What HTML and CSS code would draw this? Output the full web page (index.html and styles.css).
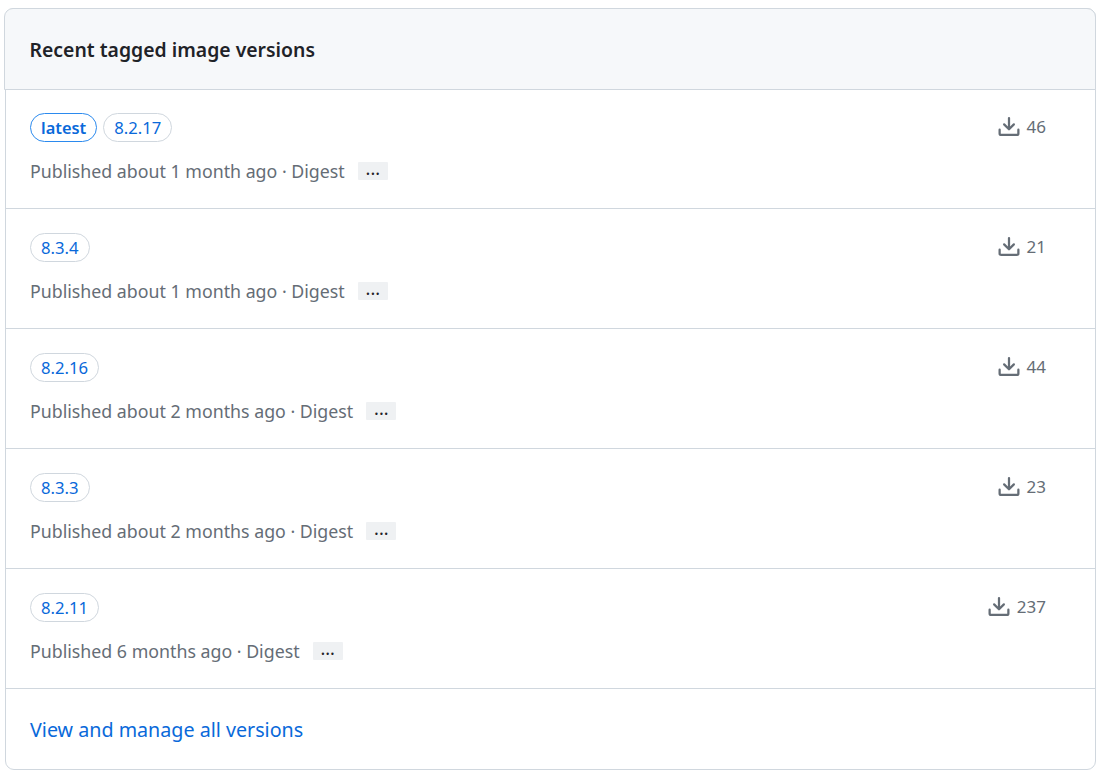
FILE: index.html
```html
<!DOCTYPE html>
<html lang="en">
<head>
<meta charset="utf-8">
<title>Recent tagged image versions</title>
<link rel="stylesheet" href="styles.css">
</head>
<body>
<section class="box">
  <header class="box-header"><h2 class="box-title">Recent tagged image versions</h2></header>
  <ul class="versions">
    <li class="row">
      <div class="row-main">
        <div class="tags"><a class="tag tag-latest" href="#">latest</a><a class="tag" href="#">8.2.17</a></div>
        <div class="meta">Published about 1 month ago · Digest <button class="more">···</button></div>
      </div>
      <div class="downloads"><svg class="dl" viewBox="0 0 16 16"><path d="M2.75 14A1.75 1.75 0 0 1 1 12.25v-2.5a.75.75 0 0 1 1.5 0v2.5c0 .138.112.25.25.25h10.5a.25.25 0 0 0 .25-.25v-2.5a.75.75 0 0 1 1.5 0v2.5A1.75 1.75 0 0 1 13.25 14Z"/><path d="M7.25 7.689V2a.75.75 0 0 1 1.5 0v5.689l1.97-1.969a.749.749 0 1 1 1.06 1.06l-3.25 3.25a.749.749 0 0 1-1.06 0L4.22 6.78a.749.749 0 1 1 1.06-1.06l1.97 1.969Z"/></svg>46</div>
    </li>
    <li class="row">
      <div class="row-main">
        <div class="tags"><a class="tag" href="#">8.3.4</a></div>
        <div class="meta">Published about 1 month ago · Digest <button class="more">···</button></div>
      </div>
      <div class="downloads"><svg class="dl" viewBox="0 0 16 16"><path d="M2.75 14A1.75 1.75 0 0 1 1 12.25v-2.5a.75.75 0 0 1 1.5 0v2.5c0 .138.112.25.25.25h10.5a.25.25 0 0 0 .25-.25v-2.5a.75.75 0 0 1 1.5 0v2.5A1.75 1.75 0 0 1 13.25 14Z"/><path d="M7.25 7.689V2a.75.75 0 0 1 1.5 0v5.689l1.97-1.969a.749.749 0 1 1 1.06 1.06l-3.25 3.25a.749.749 0 0 1-1.06 0L4.22 6.78a.749.749 0 1 1 1.06-1.06l1.97 1.969Z"/></svg>21</div>
    </li>
    <li class="row">
      <div class="row-main">
        <div class="tags"><a class="tag" href="#">8.2.16</a></div>
        <div class="meta">Published about 2 months ago · Digest <button class="more">···</button></div>
      </div>
      <div class="downloads"><svg class="dl" viewBox="0 0 16 16"><path d="M2.75 14A1.75 1.75 0 0 1 1 12.25v-2.5a.75.75 0 0 1 1.5 0v2.5c0 .138.112.25.25.25h10.5a.25.25 0 0 0 .25-.25v-2.5a.75.75 0 0 1 1.5 0v2.5A1.75 1.75 0 0 1 13.25 14Z"/><path d="M7.25 7.689V2a.75.75 0 0 1 1.5 0v5.689l1.97-1.969a.749.749 0 1 1 1.06 1.06l-3.25 3.25a.749.749 0 0 1-1.06 0L4.22 6.78a.749.749 0 1 1 1.06-1.06l1.97 1.969Z"/></svg>44</div>
    </li>
    <li class="row">
      <div class="row-main">
        <div class="tags"><a class="tag" href="#">8.3.3</a></div>
        <div class="meta">Published about 2 months ago · Digest <button class="more">···</button></div>
      </div>
      <div class="downloads"><svg class="dl" viewBox="0 0 16 16"><path d="M2.75 14A1.75 1.75 0 0 1 1 12.25v-2.5a.75.75 0 0 1 1.5 0v2.5c0 .138.112.25.25.25h10.5a.25.25 0 0 0 .25-.25v-2.5a.75.75 0 0 1 1.5 0v2.5A1.75 1.75 0 0 1 13.25 14Z"/><path d="M7.25 7.689V2a.75.75 0 0 1 1.5 0v5.689l1.97-1.969a.749.749 0 1 1 1.06 1.06l-3.25 3.25a.749.749 0 0 1-1.06 0L4.22 6.78a.749.749 0 1 1 1.06-1.06l1.97 1.969Z"/></svg>23</div>
    </li>
    <li class="row">
      <div class="row-main">
        <div class="tags"><a class="tag" href="#">8.2.11</a></div>
        <div class="meta">Published 6 months ago · Digest <button class="more">···</button></div>
      </div>
      <div class="downloads"><svg class="dl" viewBox="0 0 16 16"><path d="M2.75 14A1.75 1.75 0 0 1 1 12.25v-2.5a.75.75 0 0 1 1.5 0v2.5c0 .138.112.25.25.25h10.5a.25.25 0 0 0 .25-.25v-2.5a.75.75 0 0 1 1.5 0v2.5A1.75 1.75 0 0 1 13.25 14Z"/><path d="M7.25 7.689V2a.75.75 0 0 1 1.5 0v5.689l1.97-1.969a.749.749 0 1 1 1.06 1.06l-3.25 3.25a.749.749 0 0 1-1.06 0L4.22 6.78a.749.749 0 1 1 1.06-1.06l1.97 1.969Z"/></svg>237</div>
    </li>
  </ul>
  <footer class="box-footer"><a class="all" href="#">View and manage all versions</a></footer>
</section>
</body>
</html>
```
FILE: styles.css
```css
* { box-sizing: border-box; }
html, body { background: #fff; }
body {
  margin: 0;
  padding: 8px 7px 0 5px;
  font-family: "Noto Sans", "Open Sans", sans-serif;
  font-size: 18px;
  color: #1f2328;
}
.box {
  border: 1px solid #d0d7de;
  border-radius: 9px;
  height: 762px;
  display: flex;
  flex-direction: column;
}
.box-header {
  height: 82px;
  margin: -1px -1px -1px -2px;
  padding: 2px 25px 0 24.5px;
  background: #f6f8fa;
  border: 1px solid #d0d7de;
  border-radius: 9px 9px 0 0;
  display: flex;
  align-items: center;
}
.box-title { margin: 0; font-size: 19.4px; font-weight: 600; line-height: 30px; }
.versions { list-style: none; margin: 0; padding: 0; }
.row {
  height: 120px;
  padding: 24px 49px 0 24px;
  border-bottom: 1px solid #d0d7de;
  display: flex;
  justify-content: space-between;
}
.tags { display: flex; gap: 6px; }
.tag {
  height: 29px;
  padding: 0 10px;
  border: 1px solid #d0d7de;
  border-radius: 15px;
  color: #0969da;
  font-size: 16.7px;
  line-height: 27px;
  text-decoration: none;
}
.tag-latest { border-color: #2b8aee; font-size: 16.4px; font-weight: 600; }
.meta { margin-top: 16px; font-size: 17.77px; line-height: 27px; color: #656d76; white-space: nowrap; }
.more {
  width: 30px;
  height: 18px;
  margin-left: 8.5px;
  padding: 4px 0 0;
  border: 0;
  border-radius: 1px;
  background: #eff1f3;
  color: #1f2328;
  font: 400 18px/14px "Noto Sans", sans-serif;
  vertical-align: -2px;
}
.downloads { display: flex; align-items: center; gap: 6px; height: 27px; font-size: 17px; color: #656d76; }
.dl { width: 24px; height: 24px; fill: #656d76; }
.box-footer { padding: 0 24px; flex: 1; display: flex; align-items: center; }
.all { font-size: 19.7px; color: #0969da; text-decoration: none; }
```
